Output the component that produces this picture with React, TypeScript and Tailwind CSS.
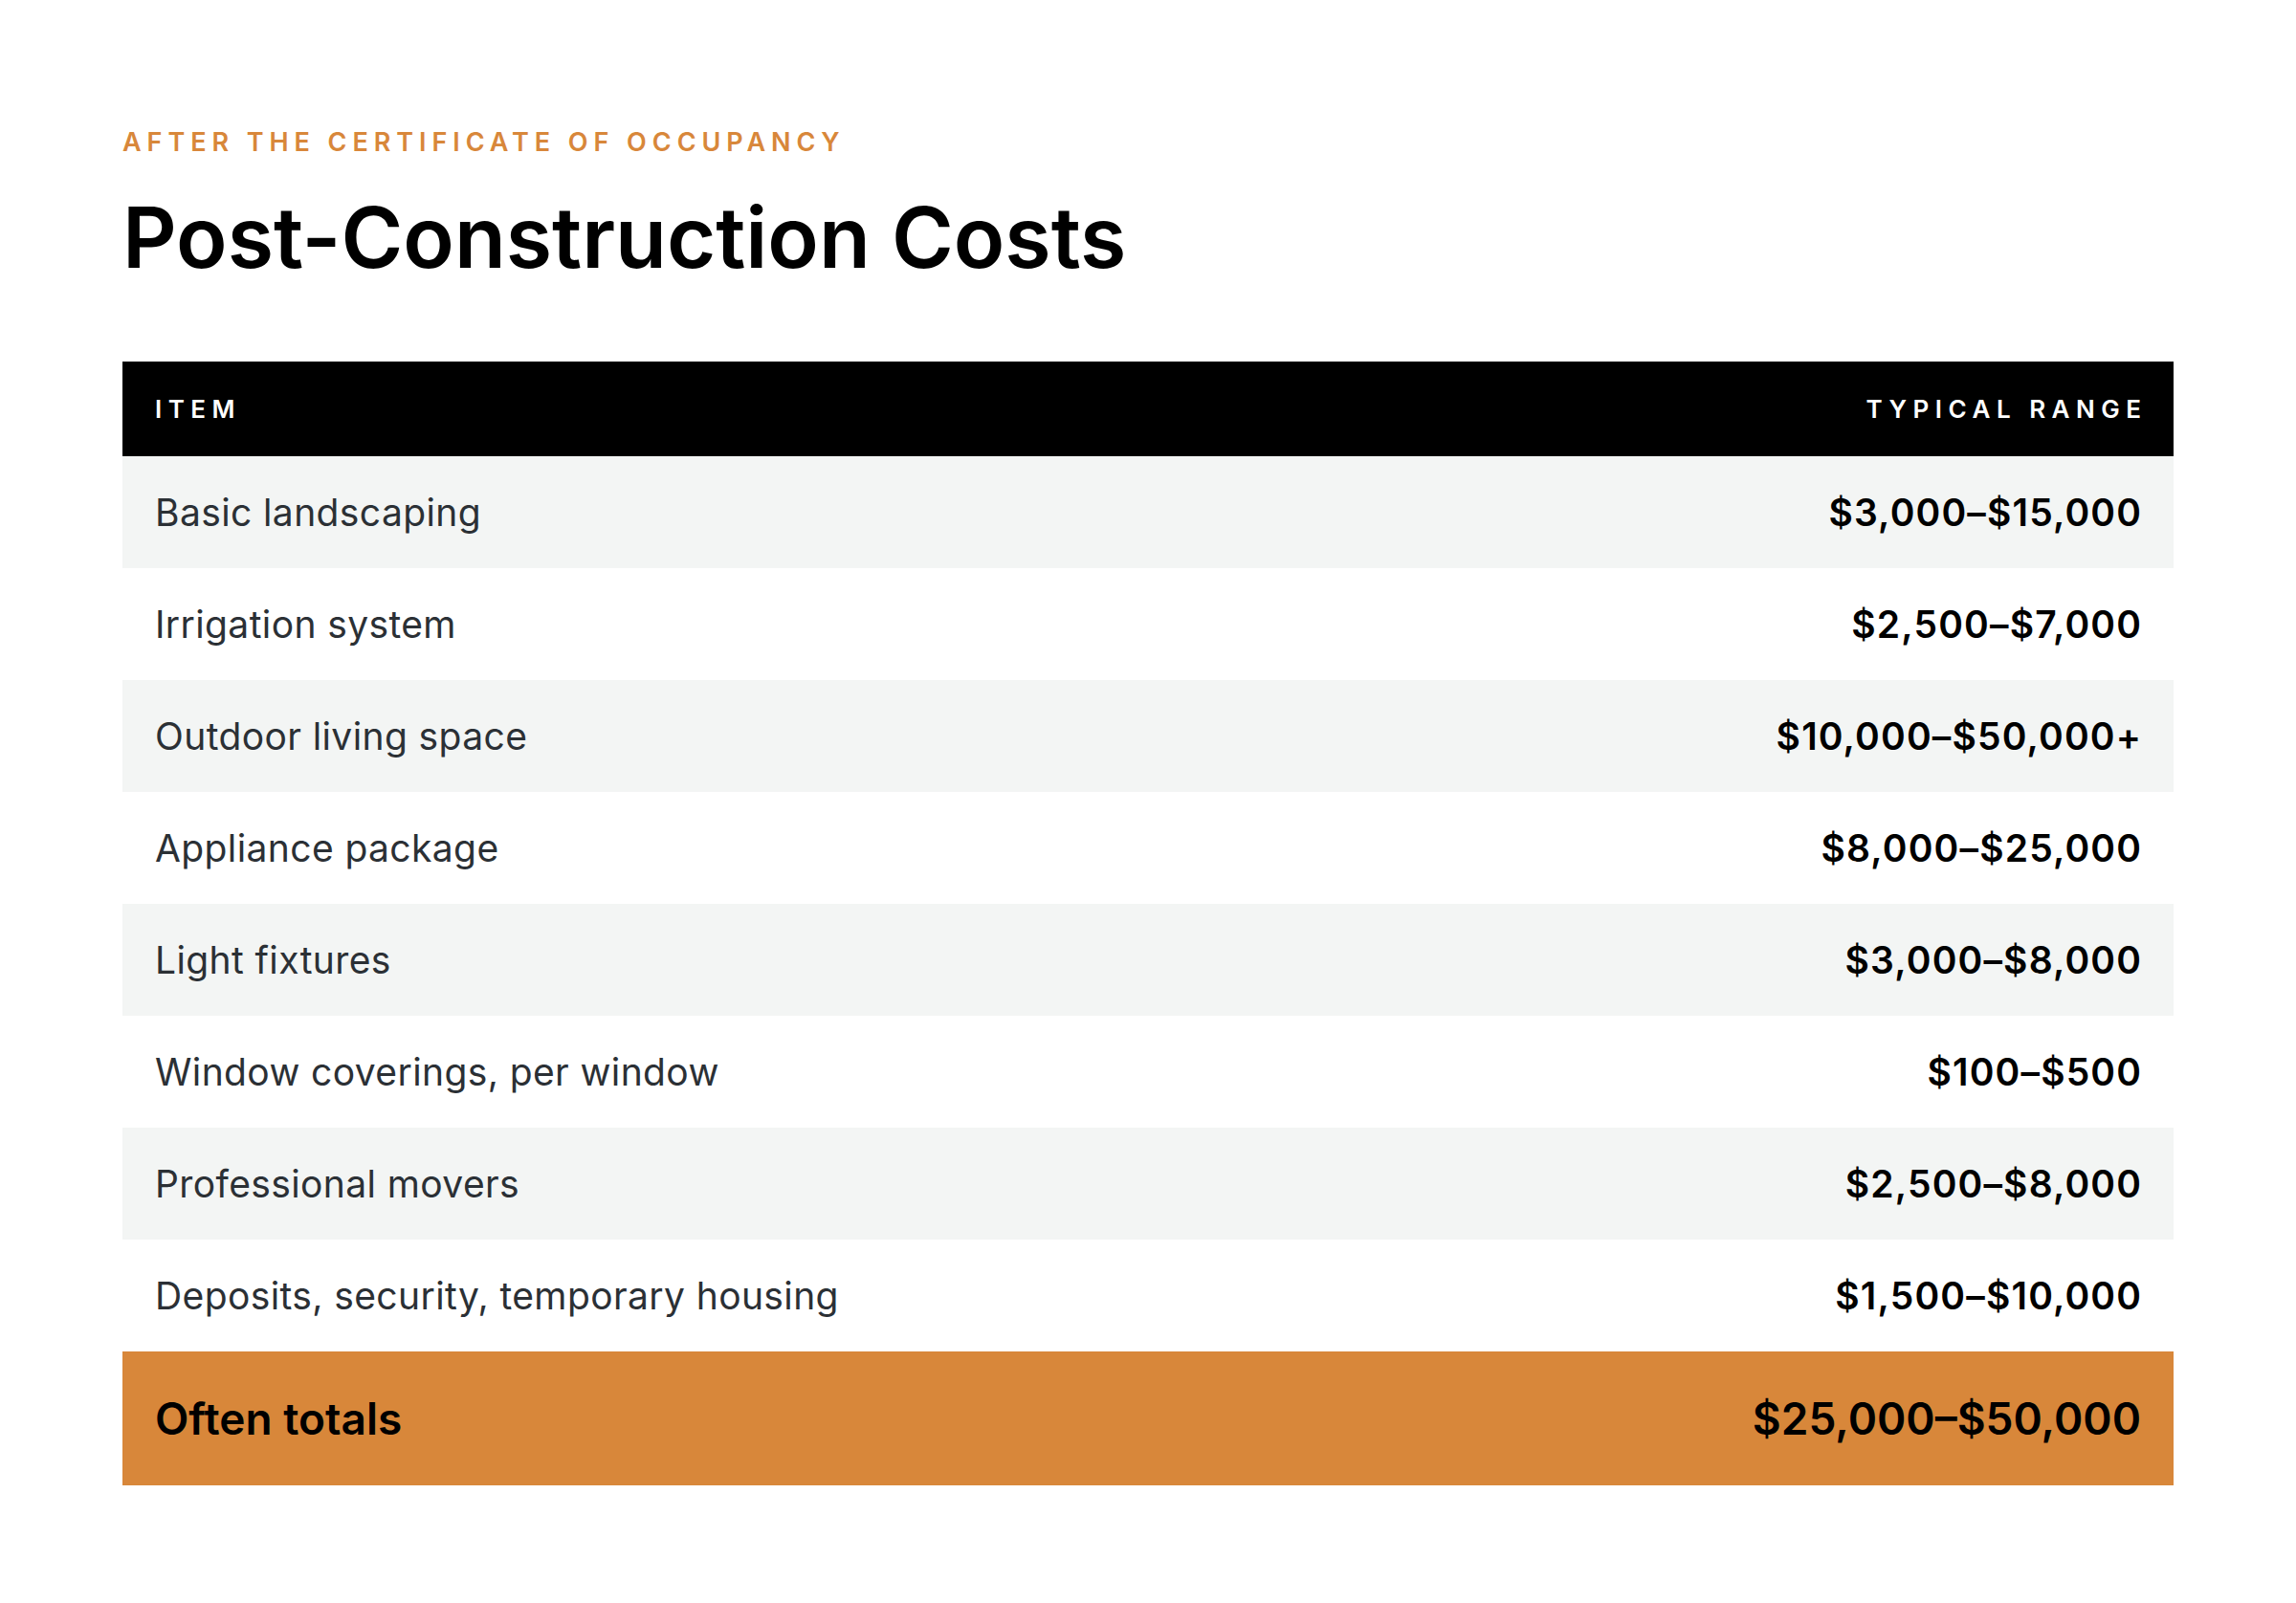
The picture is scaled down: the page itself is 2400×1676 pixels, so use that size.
import React from 'react';

const rows = [
  { item: 'Basic landscaping', range: '$3,000–$15,000' },
  { item: 'Irrigation system', range: '$2,500–$7,000' },
  { item: 'Outdoor living space', range: '$10,000–$50,000+' },
  { item: 'Appliance package', range: '$8,000–$25,000' },
  { item: 'Light fixtures', range: '$3,000–$8,000' },
  { item: 'Window coverings, per window', range: '$100–$500' },
  { item: 'Professional movers', range: '$2,500–$8,000' },
  { item: 'Deposits, security, temporary housing', range: '$1,500–$10,000' },
];

const App = () => {
  return (
    <div className="min-h-[1676px] bg-white px-[128px] pt-[135px] font-['Inter',sans-serif]">
      {/* Heading */}
      <p className="text-[27px] leading-none font-semibold tracking-[0.22em] text-[#d8873a] uppercase">
        After the certificate of occupancy
      </p>
      <h1 className="mt-[42px] text-[88px] leading-none font-semibold text-black">
        Post-Construction Costs
      </h1>

      {/* Table */}
      <div className="mt-[86px] w-full">
        <div className="flex h-[99px] items-center justify-between bg-black px-[34px] text-[26px] leading-none font-semibold tracking-[0.25em] text-white">
          <span>ITEM</span>
          <span className="-mr-[0.25em]">TYPICAL RANGE</span>
        </div>

        {rows.map((row, i) => (
          <div
            key={row.item}
            className={`flex h-[117px] items-center justify-between px-[34px] text-[39px] leading-none ${
              i % 2 === 0 ? 'bg-[#f3f5f4]' : 'bg-white'
            }`}
          >
            <span className="tracking-[0.01em] text-[#2b3035]">{row.item}</span>
            <span className="-mr-[0.03em] font-semibold tracking-[0.03em] text-black">{row.range}</span>
          </div>
        ))}

        <div className="flex h-[140px] items-center justify-between bg-[#d8873a] px-[34px] text-[46px] leading-none font-semibold text-black">
          <span>Often totals</span>
          <span>$25,000–$50,000</span>
        </div>
      </div>
    </div>
  );
};

export default App;
